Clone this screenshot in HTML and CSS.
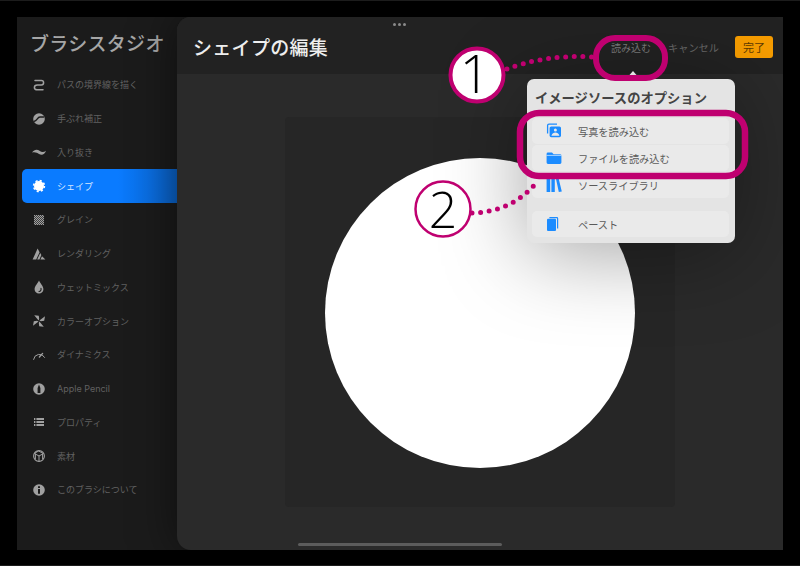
FILE: index.html
```html
<!DOCTYPE html>
<html lang="ja">
<head>
<meta charset="utf-8">
<title>ブラシスタジオ</title>
<link rel="stylesheet" href="styles.css">
</head>
<body>
<div class="screen">
  <aside class="sidebar">
    <h1 class="side-title">ブラシスタジオ</h1>
    <nav class="side-list">
      <div class="side-item"><svg class="ic" viewBox="0 0 14 14"><path class="s" d="M3 2.6H9.4A2.2 2.2 0 0 1 9.4 7H5.4C3.6 7 2.4 8.2 2.4 9.4S3.6 11.8 5.4 11.8H11" stroke-width="1.5"/></svg><span>パスの境界線を描く</span></div>
      <div class="side-item"><svg class="ic" viewBox="0 0 14 14"><circle class="f" cx="7" cy="7" r="5.8"/><path class="d" d="M2.2 9.2C5 9.4 5.2 5 8 5H11.6" stroke-width="1.4"/></svg><span>手ぶれ補正</span></div>
      <div class="side-item"><svg class="ic" viewBox="0 0 14 14"><path class="f" d="M0 7.6C2.5 3.8 5.5 4.2 7.5 5.8C9.5 7.2 11.5 7.6 14 5.8C12.6 10 9.5 10.6 7 9C5 7.7 3 6.8 0 7.6Z"/></svg><span>入り抜き</span></div>
      <div class="side-item is-active"><svg class="ic" viewBox="0 0 14 14"><circle class="w" cx="7" cy="7" r="5"/><circle class="wd" cx="7" cy="7" r="5.4" stroke-width="1.6" stroke-dasharray="2.12 2.12"/></svg><span>シェイプ</span></div>
      <div class="side-item"><svg class="ic" viewBox="0 0 14 14"><defs><pattern id="grain" width="2" height="2" patternUnits="userSpaceOnUse"><rect class="f" width="1" height="1"/><rect class="f" x="1" y="1" width="1" height="1"/></pattern></defs><rect class="soft" x="2" y="2" width="10" height="10"/><rect x="2" y="2" width="10" height="10" fill="url(#grain)"/></svg><span>グレイン</span></div>
      <div class="side-item"><svg class="ic" viewBox="0 0 14 14"><path class="f" d="M.6 12.6L5.6 1.6L7.6 5.2L4.2 12.6ZM5.2 12.6L8.2 6L9.4 8L7.4 12.6ZM8.4 12.6L10 9.2L13.4 12.6Z"/></svg><span>レンダリング</span></div>
      <div class="side-item"><svg class="ic" viewBox="0 0 14 14"><path class="f" d="M7 .6C7.6 2.8 11.4 6 11.4 9.2A4.4 4.4 0 0 1 2.6 9.2C2.6 6 6.4 2.8 7 .6Z"/><path class="d" d="M9 8.4C9.4 10.2 8.4 11.4 7 11.5" stroke-width="1.1"/></svg><span>ウェットミックス</span></div>
      <div class="side-item"><svg class="ic" viewBox="0 0 14 14"><path class="f" d="M6.6 6.6L2.2 1.2L6.8 1.8L7.2 5ZM7.4 6.6L13 2.2L12.2 6.8L9 7.2ZM7.4 7.4L11.8 12.8L7.2 12.2L6.8 9ZM6.6 7.4L1 11.8L1.8 7.2L5 6.8Z"/></svg><span>カラーオプション</span></div>
      <div class="side-item"><svg class="ic" viewBox="0 0 14 14"><path class="s" d="M1.6 11.4A5.9 5.9 0 0 1 12.6 9.4" stroke-width="1"/><path class="s" d="M7.4 9L10.6 5.4" stroke-width="1.4"/></svg><span>ダイナミクス</span></div>
      <div class="side-item"><svg class="ic" viewBox="0 0 14 14"><circle class="f" cx="7" cy="7" r="5.8"/><path class="df" d="M7 2.4L8.4 6V11H5.6V6Z"/></svg><span>Apple Pencil</span></div>
      <div class="side-item"><svg class="ic" viewBox="0 0 14 14"><path class="f" d="M2 3H3.4V5H2ZM4.4 3H12V5H4.4ZM2 6H3.4V8H2ZM4.4 6H12V8H4.4ZM2 9H3.4V11H2ZM4.4 9H12V11H4.4Z"/></svg><span>プロパティ</span></div>
      <div class="side-item"><svg class="ic" viewBox="0 0 14 14"><circle class="s" cx="7" cy="7" r="5.4" stroke-width="1.1"/><path class="s" d="M2.6 4.6L7 7L11.4 4.6L7 2.2ZM7 7V12.2M3.4 5L3.4 10M10.6 5V10" stroke-width="1"/></svg><span>素材</span></div>
      <div class="side-item"><svg class="ic" viewBox="0 0 14 14"><circle class="f" cx="7" cy="7" r="5.8"/><path class="df" d="M6 6H8V10.8H6ZM6 3.2H8V5H6Z"/></svg><span>このブラシについて</span></div>
    </nav>
  </aside>

  <main class="panel">
    <div class="grabber"><i></i><i></i><i></i></div>
    <header class="panel-head">
      <h2 class="panel-title">シェイプの編集</h2>
      <div class="actions">
        <span class="action">読み込む</span>
        <span class="action action-dim">キャンセル</span>
        <span class="done">完了</span>
      </div>
    </header>
    <section class="stage">
      <div class="canvas"><div class="disc"></div></div>
    </section>
    <div class="home-bar"></div>

    <div class="popover">
      <h3 class="pop-title">イメージソースのオプション</h3>
      <div class="pop-group">
        <div class="pop-row"><svg class="pop-ic" viewBox="0 0 16 16"><path class="bs" d="M1.6 10.6V2.6A1.4 1.4 0 0 1 3 1.2H11" stroke-width="1.3"/><rect class="bf" x="3.6" y="3.4" width="11.4" height="10.8" rx="1.6"/><circle class="wf" cx="9.4" cy="7" r="1.5"/><path class="wf" d="M5.4 12.8C6 10.4 7.8 9.6 9.4 9.6S12.8 10.4 13.4 12.8Z"/></svg><span>写真を読み込む</span></div>
        <div class="pop-row"><svg class="pop-ic" viewBox="0 0 16 16"><path class="bf" d="M.6 4A1.4 1.4 0 0 1 2 2.6H6L7.6 4.2H14A1.4 1.4 0 0 1 15.4 5.6V12.6A1.4 1.4 0 0 1 14 14H2A1.4 1.4 0 0 1 .6 12.6Z"/><path class="bl" d="M.6 5.4H15.4" stroke-width=".7"/></svg><span>ファイルを読み込む</span></div>
        <div class="pop-row"><svg class="pop-ic" viewBox="0 0 16 16"><path class="bf" d="M.6 .6H4.2V15H.6ZM5.4 .6H8.8V15H5.4ZM9.8 1L12.4 .4L15.8 14.4L12.8 15Z"/></svg><span>ソースライブラリ</span></div>
      </div>
      <div class="pop-group pop-group-last">
        <div class="pop-row"><svg class="pop-ic" viewBox="0 0 16 16"><rect class="bf" x="1" y="2.8" width="9" height="12.2" rx="1"/><path class="bf" d="M3.4 1H10.8A1.4 1.4 0 0 1 12.2 2.4V12.6H11V2.2H3.4Z"/></svg><span>ペースト</span></div>
      </div>
    </div>
  </main>
</div>

<svg class="annotations" viewBox="0 0 800 566">
  <path class="dots" d="M507 69C530 60 560 55 592 57"/>
  <path class="dots" d="M472 213C500 212 520 202 537 182"/>
  <rect class="mark" x="596" y="38" width="69" height="40" rx="19"/>
  <rect class="mark mark-wide" x="520" y="113" width="225" height="63" rx="19"/>
  <circle class="badge" cx="477" cy="75" r="26.5" stroke-width="4"/>
  <text class="num num-one" x="475" y="93">1</text>
  <circle class="badge" cx="443" cy="209" r="27.5" stroke-width="2.5"/>
  <text class="num num-two" x="443" y="228">2</text>
</svg>
</body>
</html>
```

FILE: styles.css
```css
* { box-sizing: border-box; }
html, body { margin: 0; height: 566px; overflow: hidden; }
body {
  position: relative;
  background: #000;
  border-top: 1px solid #1c1c1c;
  border-bottom: 1px solid #1c1c1c;
  padding: 16px 17px 15px;
  font-family: Inter, "Noto Sans CJK JP", sans-serif;
}
h1, h2, h3 { margin: 0; font-weight: 500; }

.screen { display: flex; height: 533px; overflow: hidden; background: #1b1b1b; }

/* sidebar */
.sidebar { width: 160px; flex: none; padding-top: 14px; }
.side-title {
  height: 28px; line-height: 28px; margin: 0 0 9px 13px;
  font-size: 19px; letter-spacing: .3px; color: #a6a6a6; white-space: nowrap;
}
.side-list { display: flex; flex-direction: column; margin-left: 5px; }
.side-item {
  height: 33.75px; display: flex; align-items: center; gap: 11px; padding-left: 10px;
  font-size: 9px; color: #616161; white-space: nowrap; border-radius: 5px 0 0 5px;
}
.is-active { background: linear-gradient(90deg, #0a7bff 62%, #0a62c8 100%); color: #d8e8ff; }
.ic { width: 14px; height: 14px; flex: none; }
.ic .f { fill: #a0a0a0; }
.ic .s { fill: none; stroke: #a0a0a0; stroke-linecap: round; stroke-linejoin: round; }
.ic .d { fill: none; stroke: #1b1b1b; stroke-linecap: round; }
.ic .df { fill: #1b1b1b; }
.ic .w { fill: #fff; }
.ic .wd { fill: none; stroke: #fff; }
.ic .soft { fill: #3e3e3e; }

/* main panel */
.panel {
  position: relative; flex: 1; display: flex; flex-direction: column;
  background: #2a2a2a; border-radius: 14px 0 0 14px; overflow: visible;
  box-shadow: 0 0 45px rgba(0, 0, 0, .5);
}
.grabber { position: absolute; top: 6px; left: 216px; display: flex; gap: 2px; }
.grabber i { width: 3px; height: 3px; border-radius: 50%; background: #8a8a8a; }
.panel-head {
  height: 57px; flex: none; display: flex; align-items: center;
  padding: 0 10px 0 16px; background: #222; border-radius: 14px 0 0 0;
}
.panel-title { font-size: 19px; letter-spacing: .3px; color: #eee; position: relative; bottom: -1px; }
.actions { margin-left: auto; display: flex; align-items: center; gap: 16px; padding-top: 3px; }
.action { font-size: 10px; color: #7c7c7c; }
.action-dim { font-size: 10.2px; color: #686868; margin-left: 1px; }
.done {
  width: 38px; height: 22px; display: flex; align-items: center; justify-content: center;
  background: #f79d00; border-radius: 3px; font-size: 11px; color: #5c3a00;
}
.stage { flex: 1; display: flex; justify-content: center; padding-top: 43px; }
.canvas {
  width: 390px; height: 390px; display: flex; align-items: center; justify-content: center;
  background: #262626; border-radius: 4px;
}
.disc { width: 310px; height: 310px; border-radius: 50%; background: #fff; position: relative; top: 1px; }
.home-bar {
  position: absolute; left: 121px; bottom: 4px; width: 204px; height: 3px;
  border-radius: 2px; background: #5c5c5c;
}

/* popover */
.popover {
  position: absolute; left: 350px; top: 62px; width: 208px; height: 164px;
  padding: 0 6px 0 5px; background: #e4e4e4; border-radius: 7px;
  box-shadow: 0 10px 85px rgba(0, 0, 0, .36);
}
.popover::before {
  content: ""; position: absolute; left: 99px; top: -8px;
  border: 7px solid transparent; border-top: 0; border-bottom: 8px solid #e4e4e4;
}
.pop-title {
  height: 39px; line-height: 39px; padding-left: 3px;
  font-size: 13.3px; font-weight: 700; color: #444; white-space: nowrap;
}
.pop-group { display: flex; flex-direction: column; gap: 1px; margin-bottom: 13px; }
.pop-row {
  height: 26px; display: flex; align-items: center; gap: 16px; padding-left: 14px;
  background: #eaeaea; border-radius: 5px; font-size: 10.2px; color: #5a5a5a; white-space: nowrap;
}
.pop-ic { width: 16px; height: 16px; flex: none; }
.pop-ic .bf { fill: #1c8cff; }
.pop-ic .bs { fill: none; stroke: #1c8cff; }
.pop-ic .bl { fill: none; stroke: #e8f2ff; }
.pop-ic .wf { fill: #eaeaea; }

/* annotation overlay */
.annotations { position: absolute; left: 0; top: -1px; width: 800px; height: 566px; pointer-events: none; }
.dots { fill: none; stroke: #bf0070; stroke-width: 5; stroke-linecap: round; stroke-dasharray: 0 8.6; }
.mark { fill: none; stroke: #bf0070; stroke-width: 6; }
.mark-wide { stroke-width: 6.5; }
.badge { fill: #fff; stroke: #bf0070; }
.num { font-family: "Open Sans", sans-serif; font-weight: 300; text-anchor: middle; fill: #000; }
.num-one { font-size: 53px; }
.num-two { font-size: 50px; }
```
